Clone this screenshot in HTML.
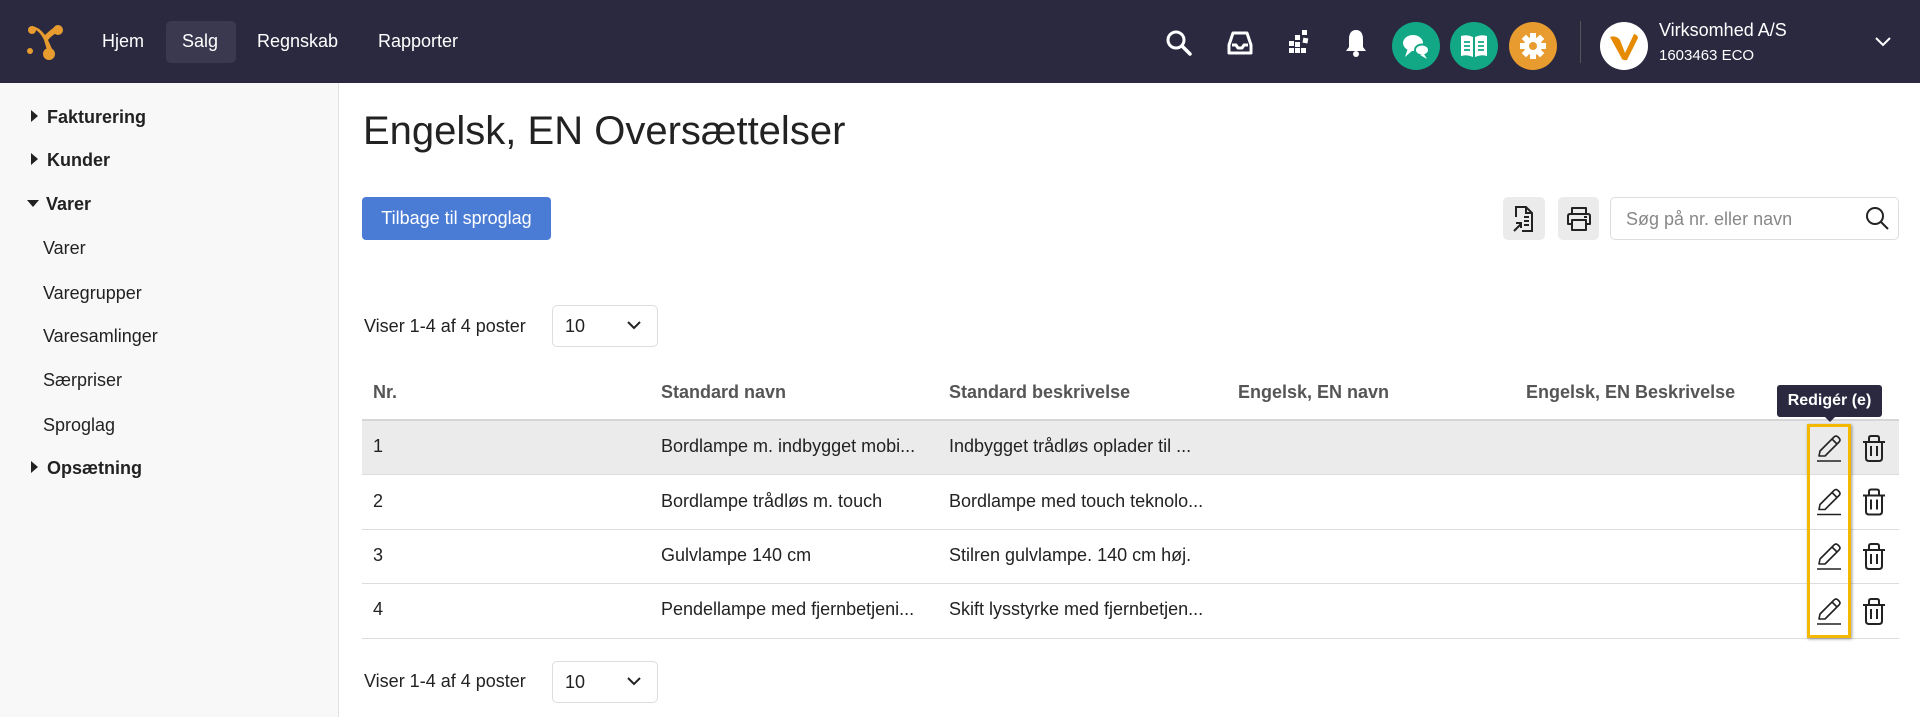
<!DOCTYPE html>
<html><head><meta charset="utf-8"><style>
*{box-sizing:border-box;margin:0;padding:0}
body{width:1920px;height:717px;overflow:hidden;font-family:"Liberation Sans",Arial,sans-serif;background:#fff;color:#222;position:relative}
.a{position:absolute}
.hdr{left:0;top:0;width:1920px;height:83px;background:#2a2940}
.nav{color:#fff;font-size:18px;top:31px}
.ic{top:22px;width:48px;height:48px;border-radius:50%}
.side{left:0;top:83px;width:339px;height:634px;background:#f8f8f8;border-right:1px solid #e2e2e2}
.si{font-size:18px;color:#222}
.sb{font-weight:bold}
.tri{display:inline-block;width:0;height:0;border-top:6px solid transparent;border-bottom:6px solid transparent;border-left:7px solid #222;margin-right:9px;vertical-align:1px}
.trd{display:inline-block;width:0;height:0;border-left:6px solid transparent;border-right:6px solid transparent;border-top:7px solid #222;margin-right:7px;vertical-align:3px}
.th{font-weight:bold;color:#555;font-size:18px;top:382px}
.row{left:362px;width:1537px;border-bottom:1px solid #ddd}
.td{font-size:18px;color:#222}
.btn{background:#ebebeb;border-radius:5px}
.sel{width:106px;height:42px;border:1px solid #ddd;border-radius:5px;background:#fff;font-size:18px;padding:10px 0 0 12px}
</style></head><body>
<div class="a hdr"></div>
<svg class="a" style="left:26px;top:22px" width="40" height="40" viewBox="0 0 40 40"><g fill="#e89c2f"><circle cx="32" cy="8" r="5"/><circle cx="23" cy="32" r="6"/><circle cx="4" cy="29" r="3"/><circle cx="6" cy="8" r="4"/><path d="M6 6 Q14 9 18 18 L21 28 L26 27 L22 18 Q27 12 33 10 L30 4 Q24 8 19 13 Q13 5 6 4Z"/></g></svg>
<div class="a" style="left:166px;top:21px;width:70px;height:42px;background:#3a3950;border-radius:5px"></div>
<div class="a nav" style="left:102px">Hjem</div>
<div class="a nav" style="left:182px">Salg</div>
<div class="a nav" style="left:257px">Regnskab</div>
<div class="a nav" style="left:378px">Rapporter</div>
<svg class="a" style="left:1165px;top:29px" width="28" height="28" viewBox="0 0 28 28"><circle cx="11" cy="11" r="8" fill="none" stroke="#fff" stroke-width="3"/><path d="M17 17 L25 25" stroke="#fff" stroke-width="3.5" stroke-linecap="round"/></svg>
<svg class="a" style="left:1226px;top:30px" width="28" height="26" viewBox="0 0 28 26"><path d="M3 15 L7 3 H21 L25 15 V23 H3Z M6 15 H10 L12 18 H16 L18 15 H22" fill="none" stroke="#fff" stroke-width="3" stroke-linejoin="round"/></svg>
<svg class="a" style="left:1286px;top:29px" width="26" height="28" viewBox="0 0 26 28"><g fill="#fff"><rect x="16" y="1" width="5" height="5"/><rect x="9" y="6" width="5" height="5"/><rect x="17" y="9" width="5" height="5" transform="rotate(10 19 11)"/><rect x="3" y="12" width="5" height="5"/><rect x="9" y="13" width="5" height="5"/><rect x="3" y="19" width="5" height="5"/><rect x="9" y="19" width="5" height="5"/><rect x="15" y="19" width="5" height="5"/></g></svg>
<svg class="a" style="left:1344px;top:28px" width="24" height="30" viewBox="0 0 24 30"><path d="M12 2 C7 2 5 6 5 11 V19 L2 23 H22 L19 19 V11 C19 6 17 2 12 2Z" fill="#fff"/><circle cx="12" cy="26" r="3" fill="#fff"/></svg>
<div class="a ic" style="left:1392px;background:#12a886"></div>
<svg class="a" style="left:1400px;top:30px" width="32" height="32" viewBox="0 0 32 32"><ellipse cx="13" cy="13" rx="10" ry="8" fill="#fff"/><path d="M8 18 L5 27 L13 20Z" fill="#fff"/><ellipse cx="22" cy="20" rx="7" ry="5.5" fill="#fff" stroke="#12a886" stroke-width="2"/><path d="M24 24 L27 29 L20 25Z" fill="#fff"/></svg>
<div class="a ic" style="left:1450px;background:#12a886"></div>
<svg class="a" style="left:1459px;top:33px" width="30" height="26" viewBox="0 0 30 26"><path d="M2 3 Q8 1 14 4 V24 Q8 21 2 23Z M28 3 Q22 1 16 4 V24 Q22 21 28 23Z" fill="#fff"/><g stroke="#12a886" stroke-width="1.8"><path d="M5 9H11M5 13H11M5 17H11M19 9H25M19 13H25M19 17H25"/></g></svg>
<div class="a ic" style="left:1509px;background:#e89c2f"></div>
<svg class="a" style="left:1519px;top:32px" width="28" height="28" viewBox="0 0 28 28"><g fill="#fff"><circle cx="14" cy="14" r="9"/><g id="t"><rect x="11" y="1" width="6" height="6"/><rect x="11" y="21" width="6" height="6"/></g><use href="#t" transform="rotate(45 14 14)"/><use href="#t" transform="rotate(90 14 14)"/><use href="#t" transform="rotate(135 14 14)"/></g><circle cx="14" cy="14" r="4" fill="#e89c2f"/></svg>
<div class="a" style="left:1580px;top:21px;width:1px;height:42px;background:#555"></div>
<div class="a ic" style="left:1600px;background:#fff"></div>
<svg class="a" style="left:1608px;top:32px" width="32" height="30" viewBox="0 0 32 30"><path d="M2 5 Q8 3 12 8 L17 21 L26 2 Q30 3 30 6 L19 28 Q14 29 13 25Z" fill="#e68a00"/></svg>
<div class="a" style="left:1659px;top:20px;color:#fff;font-size:18px">Virksomhed A/S</div>
<div class="a" style="left:1659px;top:47px;color:#fff;font-size:15px">1603463 ECO</div>
<svg class="a" style="left:1874px;top:36px" width="18" height="12" viewBox="0 0 18 12"><path d="M2 2 L9 9 L16 2" fill="none" stroke="#fff" stroke-width="2"/></svg>

<div class="a side"></div>
<div class="a si sb" style="left:31px;top:107px"><span class="tri"></span>Fakturering</div>
<div class="a si sb" style="left:31px;top:150px"><span class="tri"></span>Kunder</div>
<div class="a si sb" style="left:27px;top:194px"><span class="trd"></span>Varer</div>
<div class="a si" style="left:43px;top:238px">Varer</div>
<div class="a si" style="left:43px;top:283px">Varegrupper</div>
<div class="a si" style="left:43px;top:326px">Varesamlinger</div>
<div class="a si" style="left:43px;top:370px">Særpriser</div>
<div class="a si" style="left:43px;top:415px">Sproglag</div>
<div class="a si sb" style="left:31px;top:458px"><span class="tri"></span>Opsætning</div>

<div class="a" style="left:363px;top:109px;font-size:40px;color:#222">Engelsk, EN Oversættelser</div>
<div class="a" style="left:362px;top:197px;width:189px;height:43px;background:#4a7bd5;border-radius:4px;color:#fff;font-size:18px;text-align:center;line-height:43px">Tilbage til sproglag</div>
<div class="a btn" style="left:1503px;top:197px;width:42px;height:43px"></div>
<svg class="a" style="left:1511px;top:205px" width="26" height="28" viewBox="0 0 26 28"><path d="M5 12 V2 H15 L21 8 V26 H11 M15 2 V8 H21" fill="none" stroke="#222" stroke-width="2"/><path d="M13 12H18M13 16H18M13 20H18M3 26 L10 19 M5 18 H10 V23" fill="none" stroke="#222" stroke-width="2"/></svg>
<div class="a btn" style="left:1558px;top:197px;width:41px;height:43px"></div>
<svg class="a" style="left:1565px;top:205px" width="28" height="28" viewBox="0 0 28 28"><path d="M7 9 V3 H21 V9 M7 19 H3 V11 Q3 9 5 9 H23 Q25 9 25 11 V19 H21 M7 15 H21 V25 H7Z" fill="none" stroke="#222" stroke-width="2" stroke-linejoin="round"/><path d="M19 12 H22" stroke="#222" stroke-width="2"/></svg>
<div class="a" style="left:1610px;top:197px;width:289px;height:43px;border:1px solid #ddd;border-radius:5px"></div>
<div class="a" style="left:1626px;top:209px;font-size:18px;color:#888">Søg på nr. eller navn</div>
<svg class="a" style="left:1865px;top:206px" width="26" height="26" viewBox="0 0 26 26"><circle cx="10" cy="10" r="8" fill="none" stroke="#222" stroke-width="2"/><path d="M16 16 L23 23" stroke="#222" stroke-width="2"/></svg>

<div class="a td" style="left:364px;top:316px">Viser 1-4 af 4 poster</div>
<div class="a sel" style="left:552px;top:305px">10</div>
<svg class="a" style="left:626px;top:319px" width="16" height="12" viewBox="0 0 16 12"><path d="M2 3 L8 9 L14 3" fill="none" stroke="#222" stroke-width="2"/></svg>

<div class="a th" style="left:373px">Nr.</div>
<div class="a th" style="left:661px">Standard navn</div>
<div class="a th" style="left:949px">Standard beskrivelse</div>
<div class="a th" style="left:1238px">Engelsk, EN navn</div>
<div class="a th" style="left:1526px">Engelsk, EN Beskrivelse</div>
<div class="a" style="left:362px;top:419px;width:1537px;height:2px;background:#d6d6d6"></div>
<div class="a row" style="top:421px;height:54px;background:#ebebeb"></div>
<div class="a row" style="top:475px;height:55px"></div>
<div class="a row" style="top:530px;height:54px"></div>
<div class="a row" style="top:584px;height:55px"></div>

<div class="a td" style="left:373px;top:436px">1</div>
<div class="a td" style="left:661px;top:436px">Bordlampe m. indbygget mobi...</div>
<div class="a td" style="left:949px;top:436px">Indbygget trådløs oplader til ...</div>
<div class="a td" style="left:373px;top:491px">2</div>
<div class="a td" style="left:661px;top:491px">Bordlampe trådløs m. touch</div>
<div class="a td" style="left:949px;top:491px">Bordlampe med touch teknolo...</div>
<div class="a td" style="left:373px;top:545px">3</div>
<div class="a td" style="left:661px;top:545px">Gulvlampe 140 cm</div>
<div class="a td" style="left:949px;top:545px">Stilren gulvlampe. 140 cm høj.</div>
<div class="a td" style="left:373px;top:599px">4</div>
<div class="a td" style="left:661px;top:599px">Pendellampe med fjernbetjeni...</div>
<div class="a td" style="left:949px;top:599px">Skift lysstyrke med fjernbetjen...</div>

<div class="a" style="left:1777px;top:385px;width:105px;height:32px;background:#2a2940;border-radius:3px;color:#fff;font-weight:bold;font-size:16px;text-align:center;line-height:32px">Redigér (e)</div>
<div class="a" style="left:1824px;top:416px;width:0;height:0;border-left:6px solid transparent;border-right:6px solid transparent;border-top:6px solid #2a2940"></div>
<div class="a" style="left:1807px;top:424px;width:44px;height:214px;border:3px solid #f5b800;box-shadow:1px 1px 3px rgba(0,0,0,.4)"></div>

<svg class="a" style="left:1814px;top:434px" width="30" height="200" viewBox="0 0 30 200">
<g id="p" fill="none" stroke="#222" stroke-width="1.6" stroke-linejoin="round"><path d="M5 22 L6 17 L20 3 Q22 1 24 3 L25 4 Q27 6 25 8 L11 22Z M18 5 L23 10"/><path d="M3 27 H27"/></g>
<use href="#p" y="53.5"/><use href="#p" y="108"/><use href="#p" y="163"/></svg>
<svg class="a" style="left:1861px;top:434px" width="26" height="200" viewBox="0 0 26 200">
<g id="t2" fill="none" stroke="#222" stroke-width="2" stroke-linejoin="round"><path d="M2 8 H24 M8 8 V4 Q8 2 10 2 H16 Q18 2 18 4 V8 M5 8 V24 Q5 27 8 27 H18 Q21 27 21 24 V8 M10 12 V22 M16 12 V22"/></g>
<use href="#t2" y="53.5"/><use href="#t2" y="108"/><use href="#t2" y="163"/></svg>

<div class="a td" style="left:364px;top:671px">Viser 1-4 af 4 poster</div>
<div class="a sel" style="left:552px;top:661px">10</div>
<svg class="a" style="left:626px;top:675px" width="16" height="12" viewBox="0 0 16 12"><path d="M2 3 L8 9 L14 3" fill="none" stroke="#222" stroke-width="2"/></svg>
</body></html>
